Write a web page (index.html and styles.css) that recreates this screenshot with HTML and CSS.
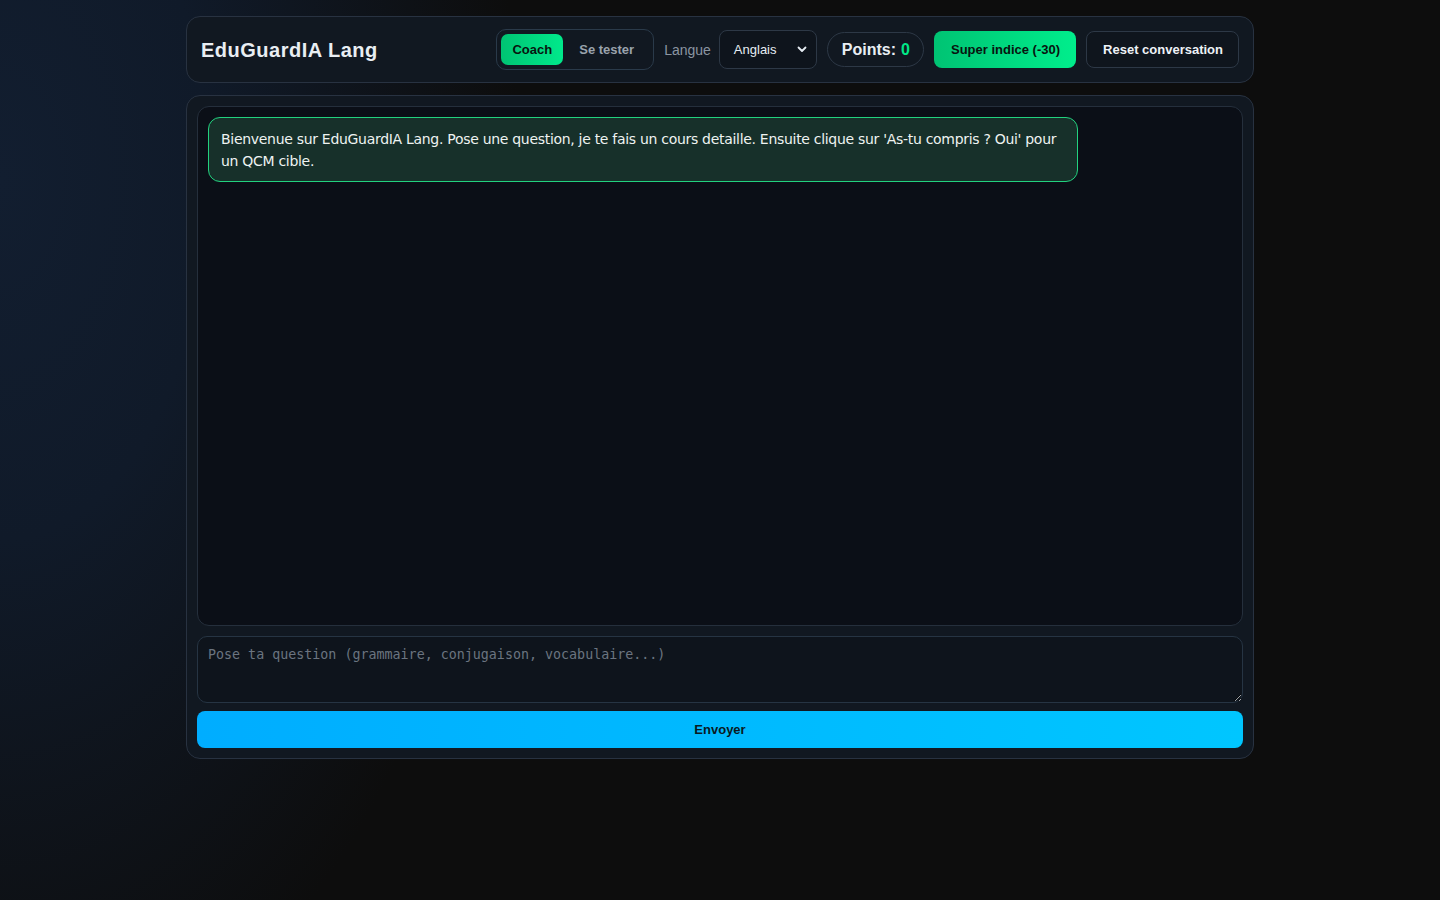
FILE: index.html
```html
<!DOCTYPE html>
<html lang="fr">
<head>
<meta charset="utf-8">
<title>EduGuardIA Lang</title>
<link rel="stylesheet" href="styles.css">
</head>
<body>
<div class="app">
  <header class="topbar">
    <h1 class="brand">EduGuardIA Lang</h1>
    <div class="controls">
      <div class="modes">
        <button class="mode active">Coach</button>
        <button class="mode">Se tester</button>
      </div>
      <label class="lang-label">Langue</label>
      <div class="select">
        <span>Anglais</span>
        <svg width="10" height="7" viewBox="0 0 10 7"><path d="M1.5 1.5 5 5 8.5 1.5" fill="none" stroke="#e6edf3" stroke-width="1.8" stroke-linecap="round" stroke-linejoin="round"/></svg>
      </div>
      <div class="points">Points: <span class="pts">0</span></div>
      <button class="hint">Super indice (-30)</button>
      <button class="reset">Reset conversation</button>
    </div>
  </header>
  <main class="card">
    <div class="chat">
      <div class="bubble">Bienvenue sur EduGuardIA Lang. Pose une question, je te fais un cours detaille. Ensuite clique sur 'As-tu compris ? Oui' pour un QCM cible.</div>
    </div>
    <textarea class="input" placeholder="Pose ta question (grammaire, conjugaison, vocabulaire...)"></textarea>
    <button class="send">Envoyer</button>
  </main>
</div>
</body>
</html>
```
FILE: styles.css
```css
* { box-sizing: border-box; }
html, body { height: 100%; }
body {
  margin: 0;
  min-height: 900px;
  background:
    radial-gradient(ellipse 520px 900px at 0% 20%, #121e30 0%, #101a29 40%, rgba(13,13,13,0) 100%),
    #0d0d0d;
  font-family: "Liberation Sans", Arial, sans-serif;
  color: #e6edf3;
}
.app {
  width: 1068px;
  margin: 0 auto;
  padding-top: 16px;
  display: flex;
  flex-direction: column;
  gap: 12px;
}
.topbar {
  height: 67px;
  border: 1px solid #283241;
  border-radius: 14px;
  background: #111821;
  display: flex;
  align-items: center;
  justify-content: space-between;
  padding: 0 14px;
}
.brand {
  margin: 0;
  font-size: 20px;
  font-weight: 700;
  color: #e9eef3;
  letter-spacing: 0.5px;
  padding-top: 2px;
}
.controls {
  display: flex;
  align-items: center;
}
.modes {
  display: flex;
  align-items: center;
  height: 41px;
  padding: 4px;
  border: 1px solid #2a3a4a;
  border-radius: 10px;
  background: #111821;
  margin-right: 10px;
}
button {
  font-family: "Liberation Sans", Arial, sans-serif;
  cursor: pointer;
}
.mode {
  height: 31px;
  border: 0;
  border-radius: 7px;
  background: transparent;
  color: #9aa3ad;
  font-size: 13px;
  font-weight: 700;
  padding: 0 11px;
}
.mode + .mode { padding: 0 15px 0 16px; }
.mode.active {
  background: linear-gradient(90deg, #00c473, #00e98b);
  color: #08140f;
}
.lang-label {
  font-size: 14px;
  color: #8b95a1;
  margin-right: 8px;
}
.select {
  width: 98px;
  height: 39px;
  border: 1px solid #2d3846;
  border-radius: 8px;
  background: #0e141c;
  display: flex;
  align-items: center;
  justify-content: space-between;
  padding: 0 9px 0 14px;
  font-size: 13px;
  color: #e6edf3;
  margin-right: 10px;
}
.points {
  height: 35px;
  border: 1px solid #2d3846;
  border-radius: 18px;
  padding: 0 13px 0 14px;
  display: flex;
  align-items: center;
  font-size: 16px;
  font-weight: 700;
  color: #e9eef3;
  margin-right: 10px;
}
.pts { color: #00e887; margin-left: 5px; }
.hint {
  height: 37px;
  border: 0;
  border-radius: 8px;
  padding: 0 16px 0 17px;
  background: linear-gradient(90deg, #00c373, #00ee8c);
  color: #08140f;
  font-size: 13px;
  font-weight: 700;
  margin-right: 10px;
}
.reset {
  height: 37px;
  border: 1px solid #2d3846;
  border-radius: 8px;
  padding: 0 15px 0 16px;
  background: #0f151d;
  color: #eef2f6;
  font-size: 13px;
  font-weight: 700;
}
.card {
  border: 1px solid #283241;
  border-radius: 14px;
  background: #111821;
  padding: 10px;
  display: flex;
  flex-direction: column;
}
.chat {
  height: 520px;
  border: 1px solid #252f3c;
  border-radius: 12px;
  background: #0b0f17;
  padding: 10px;
}
.bubble {
  width: 870px;
  border: 1px solid #22d27f;
  border-radius: 12px;
  background: #17302a;
  padding: 10px 12px 9px 12px;
  font-family: "DejaVu Sans", Verdana, sans-serif;
  font-size: 14px;
  line-height: 22px;
  color: #eef3f1;
  letter-spacing: -0.3px;
}
.input {
  margin-top: 10px;
  height: 67px;
  width: 100%;
  border: 1px solid #263443;
  border-radius: 10px;
  background: #0e141c;
  color: #e6edf3;
  padding: 10px 10px;
  font-family: "DejaVu Sans Mono", "Liberation Mono", monospace;
  font-size: 13.33px;
  resize: vertical;
  outline: none;
}
.input::placeholder { color: #6b7480; }
.send {
  margin-top: 8px;
  height: 37px;
  border: 0;
  border-radius: 8px;
  background: linear-gradient(90deg, #00adff, #00c6ff);
  color: #0a1a22;
  font-size: 13px;
  font-weight: 700;
}
```
